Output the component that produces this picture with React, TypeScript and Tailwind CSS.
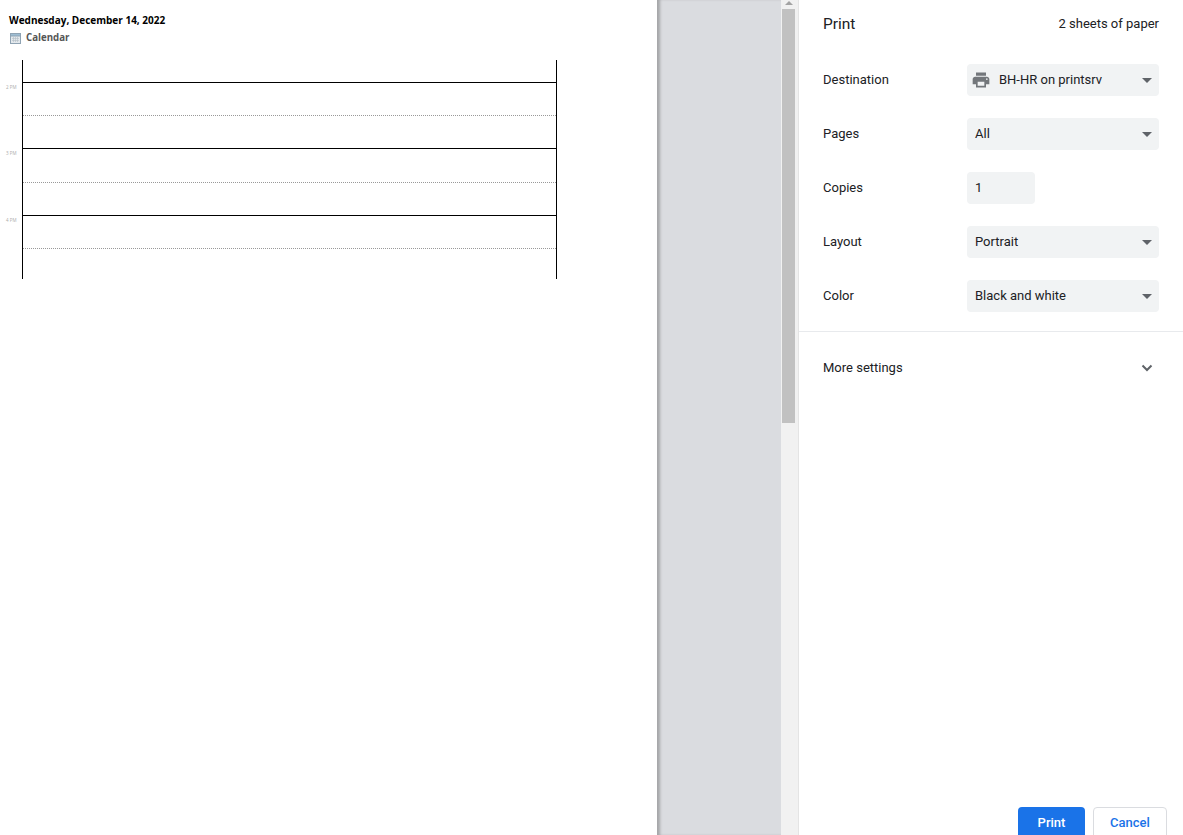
const hours = [
  { label: '2 PM', height: 'h-[66px]', half: 'h-[33px]' },
  { label: '3 PM', height: 'h-[67px]', half: 'h-[34px]' },
  { label: '4 PM', height: 'h-[64px]', half: 'h-[33px]' },
];

const settings = [
  { label: 'Destination', value: 'BH-HR on printsrv', printer: true },
  { label: 'Pages', value: 'All' },
  { label: 'Copies', value: '1', input: true },
  { label: 'Layout', value: 'Portrait' },
  { label: 'Color', value: 'Black and white' },
];

function PrinterIcon() {
  return (
    <svg viewBox="0 0 24 24" className="mr-[8px] h-[20px] w-[20px] shrink-0 fill-[#73777b]">
      <path d="M19 8H5c-1.66 0-3 1.34-3 3v6h4v4h12v-4h4v-6c0-1.66-1.34-3-3-3zm-3 11H8v-5h8v5zm3-7c-.55 0-1-.45-1-1s.45-1 1-1 1 .45 1 1-.45 1-1 1zm-1-9H6v4h12V3z" />
    </svg>
  );
}

function CalendarIcon() {
  return (
    <svg viewBox="0 0 11 11" className="ml-[1px] mt-[-1px] h-[11px] w-[11px] shrink-0">
      <rect x="0.5" y="0.5" width="10" height="10" fill="#e3e8ec" stroke="#8fa3b3" />
      <rect x="0.5" y="0.5" width="10" height="2.5" fill="#9dbdd3" stroke="#8fa3b3" />
      <path d="M2 5.5h7M2 7.5h7M3.5 4v5M5.5 4v5M7.5 4v5" stroke="#b4bec6" strokeWidth="0.6" />
    </svg>
  );
}

function SettingRow({ label, value, printer, input }: { label: string; value: string; printer?: boolean; input?: boolean }) {
  return (
    <div className="flex h-[32px] shrink-0 items-center">
      <div className="w-[144px] shrink-0">{label}</div>
      <div className={`flex h-[32px] items-center rounded-[4px] bg-[#f1f3f4] ${input ? 'w-[68px] pl-[8px]' : 'w-[192px]'} ${printer ? 'pl-[4px]' : input ? '' : 'pl-[8px]'}`}>
        {printer && <PrinterIcon />}
        <span className="flex-1">{value}</span>
        {!input && <span className="mr-[7px] h-0 w-0 border-x-[5.5px] border-t-[5.5px] border-x-transparent border-t-[#5f6368]" />}
      </div>
    </div>
  );
}

export default function App() {
  return (
    <div className="flex h-[835px] w-[1183px] overflow-hidden bg-white font-['Roboto',sans-serif] text-[13px] text-[#202124]">
      {/* Page preview */}
      <div className="w-[657px] shrink-0 bg-white pl-[9px] pt-[13px] font-['Open_Sans',sans-serif] text-black">
        <div className="h-[15px] text-[10px] font-bold leading-[15px]">Wednesday, December 14, 2022</div>
        <div className="mt-[2px] flex h-[17px] items-center gap-[5px] text-[9.7px] font-bold text-[#555]">
          <CalendarIcon />
          Calendar
        </div>
        <div className="ml-[13px] mt-[13px] w-[535px] border-x border-black">
          <div className="h-[22px]" />
          {hours.map((hour) => (
            <div key={hour.label} className={`relative border-t border-black ${hour.height}`}>
              <span className="absolute left-[-17px] top-[1px] text-[4.5px] leading-[6px] text-[#aaa]">{hour.label}</span>
              <div className={`border-b border-dotted border-[#999] ${hour.half}`} />
            </div>
          ))}
        </div>
      </div>

      {/* Grey backdrop */}
      <div className="w-[124px] shrink-0 bg-[#dadce0] shadow-[inset_4px_0_3px_-1px_#a5a6a8]" />

      {/* Scrollbar */}
      <div className="flex w-[18px] shrink-0 flex-col items-center border-r border-[#e4e4e4] bg-[#f1f1f1] pr-[2px]">
        <div className="mt-[1px] h-0 w-0 border-x-[4px] border-b-[4px] border-x-transparent border-b-[#a3a3a3]" />
        <div className="mt-[4px] h-[414px] w-[13px] bg-[#c1c1c1]" />
      </div>

      {/* Sidebar */}
      <div className="flex w-[384px] shrink-0 flex-col">
        <div className="flex h-[48px] shrink-0 items-center justify-between px-[24px]">
          <span className="text-[15.5px] leading-[20px]">Print</span>
          <span>2 sheets of paper</span>
        </div>
        <div className="flex shrink-0 flex-col gap-[22px] px-[24px] pt-[16px]">
          {settings.map((setting) => (
            <SettingRow key={setting.label} {...setting} />
          ))}
        </div>
        <div className="mt-[19px] shrink-0 border-t border-[#e8eaed]" />
        <div className="flex h-[71px] shrink-0 items-center justify-between pl-[24px] pr-[28px]">
          <span>More settings</span>
          <svg viewBox="0 0 16 16" className="h-[16px] w-[16px] fill-none stroke-[#5f6368] stroke-[2]">
            <path d="M3.5 5.5 8 10l4.5-4.5" />
          </svg>
        </div>
        <div className="mt-[404px] flex shrink-0 justify-end gap-[8px] pr-[16px] font-medium">
          <button className="h-[32px] w-[67px] shrink-0 rounded-[4px] bg-[#1a73e8] text-white">Print</button>
          <button className="h-[32px] w-[74px] shrink-0 rounded-[4px] border border-[#dadce0] bg-white text-[#1a73e8]">Cancel</button>
        </div>
      </div>
    </div>
  );
}
